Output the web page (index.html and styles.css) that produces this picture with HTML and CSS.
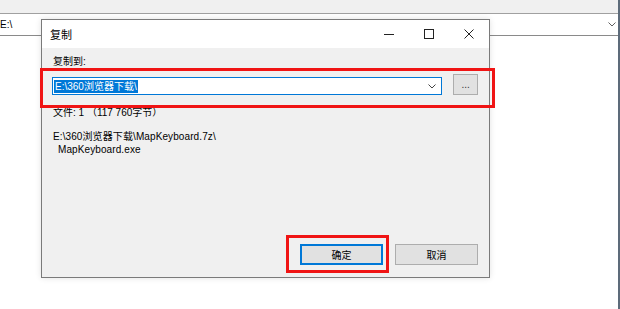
FILE: index.html
```html
<!DOCTYPE html>
<html lang="zh-CN">
<head>
  <meta charset="UTF-8">
  <title>复制</title>
  <link rel="stylesheet" href="styles.css">
</head>
<body>
<div class="explorer">
  <div class="toolbar"></div>
  <div class="address">
    <span class="address-text">E:\</span>
    <svg class="chev" width="8" height="5" viewBox="0 0 8 5"><path d="M0.5 0.5 L4 4 L7.5 0.5" fill="none" stroke="#606060" stroke-width="1"/></svg>
  </div>
  <div class="pane"></div>

  <!-- 复制对话框 -->
  <div class="dialog">
    <div class="titlebar">
      <span class="title">复制</span>
      <div class="controls">
        <svg width="10" height="10" viewBox="0 0 10 10"><path d="M0 5.5 H10" stroke="#222" stroke-width="1"/></svg>
        <svg width="10" height="10" viewBox="0 0 10 10"><rect x="0.5" y="0.5" width="9" height="9" fill="none" stroke="#222" stroke-width="1"/></svg>
        <svg width="10" height="10" viewBox="0 0 10 10"><path d="M0.5 0.5 L9.5 9.5 M9.5 0.5 L0.5 9.5" stroke="#222" stroke-width="1"/></svg>
      </div>
    </div>
    <div class="body">
      <div class="label">复制到:</div>
      <div class="path-row">
        <div class="combo">
          <span class="selected">E:\360浏览器下载\</span>
          <svg class="combo-chev" width="8" height="5" viewBox="0 0 8 5"><path d="M0.5 0.5 L4 4 L7.5 0.5" fill="none" stroke="#444" stroke-width="1"/></svg>
        </div>
        <button class="browse">...</button>
      </div>
      <div class="info">文件: 1 （117 760字节）</div>
      <div class="src">E:\360浏览器下载\MapKeyboard.7z\</div>
      <div class="src indent">MapKeyboard.exe</div>
      <div class="actions">
        <button class="btn default">确定</button>
        <button class="btn">取消</button>
      </div>
    </div>
  </div>

  <!-- 标注框 -->
  <div class="mark mark-path"></div>
  <div class="mark mark-ok"></div>
</div>
</body>
</html>
```

FILE: styles.css
```css
body {
  margin: 0;
  background: #fff;
  font-family: 'Liberation Sans', 'Noto Sans CJK SC', sans-serif;
  font-size: 10px;
  color: #000;
}
.explorer {
  position: relative;
  width: 618px;
  height: 309px;
  border-right: 2px solid #5d6b7a;
  display: flex;
  flex-direction: column;
  overflow: hidden;
}
.toolbar {
  height: 13px;
  background: #f0f0f0;
  border-bottom: 1px solid #a0a0a0;
}
.address {
  height: 21px;
  background: #fff;
  border-bottom: 1px solid #8a8a8a;
  display: flex;
  align-items: center;
  justify-content: space-between;
  padding-right: 2px;
}
.address-text {
  margin-left: 0;
}
.pane {
  flex: 1;
  background: #fff;
}
.dialog {
  position: absolute;
  left: 41px;
  top: 19px;
  width: 447px;
  height: 257px;
  border: 1px solid #7a7a7a;
  background: #f0f0f0;
  box-shadow: 0 0 6px rgba(0, 0, 0, 0.12);
  display: flex;
  flex-direction: column;
}
.titlebar {
  height: 28px;
  background: #fff;
  display: flex;
  align-items: center;
  justify-content: space-between;
}
.title {
  margin-left: 8px;
  font-size: 11px;
}
.controls {
  display: flex;
  gap: 30px;
  margin-right: 15px;
}
.body {
  flex: 1;
  display: flex;
  flex-direction: column;
  padding: 8px 11px 12px 11px;
}
.label {
  line-height: 12px;
}
.path-row {
  display: flex;
  align-items: flex-end;
  margin-top: 6px;
}
.combo {
  width: 388px;
  height: 16px;
  margin-left: -1px;
  background: #fff;
  border: 1px solid #0078d7;
  display: flex;
  align-items: center;
  justify-content: space-between;
  padding: 0 5px 0 1px;
  box-sizing: content-box;
}
.selected {
  background: #0078d7;
  color: #fff;
  line-height: 13px;
  padding: 0 1px;
}
.browse {
  width: 25px;
  height: 21px;
  margin-left: 11px;
  padding: 0;
  background: #e1e1e1;
  border: 1px solid #adadad;
  font: inherit;
  color: #333;
  line-height: 12px;
}
.info {
  margin-top: 12px;
  line-height: 12px;
}
.src {
  line-height: 13px;
  letter-spacing: 0.1px;
}
.info + .src {
  margin-top: 11px;
}
.indent {
  padding-left: 5px;
}
.actions {
  margin-top: auto;
  display: flex;
  justify-content: flex-end;
  gap: 12px;
}
.btn {
  width: 83px;
  height: 21px;
  padding: 0;
  background: #e1e1e1;
  border: 1px solid #adadad;
  font: inherit;
  color: #000;
}
.btn.default {
  border-color: #0078d7;
  box-shadow: inset 0 0 0 1px #0078d7;
}
.mark {
  position: absolute;
  border: 3px solid #f01414;
}
.mark-path {
  left: 40px;
  top: 68px;
  width: 449px;
  height: 34px;
}
.mark-ok {
  left: 286px;
  top: 235px;
  width: 97px;
  height: 32px;
}
```
